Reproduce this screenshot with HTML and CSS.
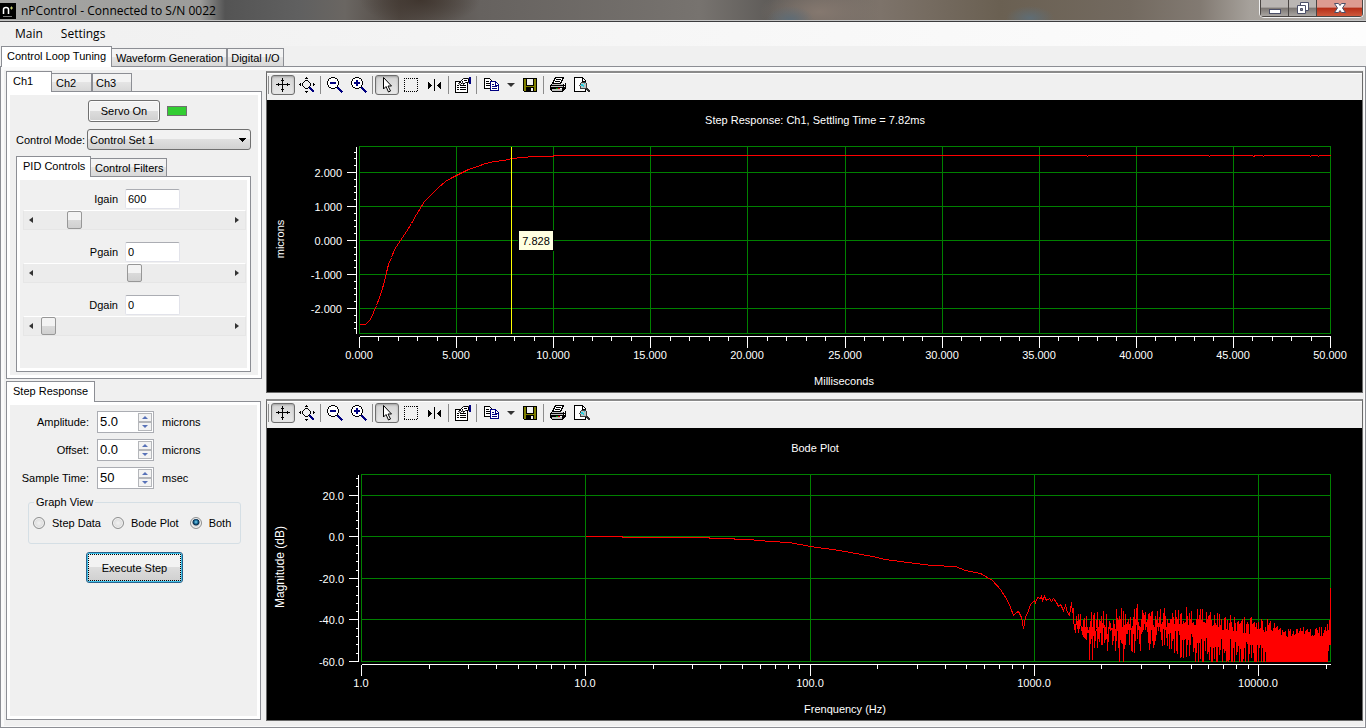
FILE: index.html
```html
<!DOCTYPE html>
<html lang="en">
<head>
<meta charset="utf-8">
<title>nPControl - Connected to S/N 0022</title>
<link rel="stylesheet" href="styles.css">
</head>
<body>
<svg class="defs" aria-hidden="true">
  <symbol id="i-pan" viewBox="0 0 16 16"><path d="M7 2h1v12h-1zM2 7h12v1h-12z M6 3h3v1h-3zM6 12h3v1h-3zM3 6h1v3h-1zM12 6h1v3h-1z M7 1h1v1h-1zM1 7h1v1h-1zM14 7h1v1h-1zM7 14h1v1h-1z"/></symbol>
  <symbol id="i-fit" viewBox="0 0 16 16"><path d="M7 0h1v1h-1zM6 1h3v1h-3zM7 15h1v1h-1zM6 14h3v1h-3zM0 7h1v1h-1zM1 6h1v3h-1zM15 7h1v1h-1zM14 6h1v3h-1z"/><path d="M6 3h3v1h-3zM6 11h3v1h-3zM3 6h1v3h-1zM11 6h1v3h-1zM4 5h1v1h-1zM5 4h1v1h-1zM9 4h1v1h-1zM10 5h1v1h-1zM4 9h1v1h-1zM5 10h1v1h-1zM9 10h1v1h-1zM10 9h1v1h-1z"/><path fill="#000080" d="M10 10h2v1h-2zM10 11h3v1h-3zM11 12h3v1h-3zM12 13h3v1h-3zM13 14h2v1h-2z"/></symbol>
  <symbol id="i-lens" viewBox="0 0 16 16"><path d="M4 0h4v1h-4zM2 1h2v1h-2zM8 1h2v1h-2zM1 2h1v2h-1zM10 2h1v2h-1zM0 4h1v4h-1zM11 4h1v4h-1zM1 8h1v2h-1zM10 8h1v2h-1zM2 10h2v1h-2zM8 10h2v1h-2zM4 11h4v1h-4z"/><path fill="#fff" d="M4 1h4v10h-4zM2 2h8v8h-8zM1 4h10v4h-10z"/><path fill="#000080" d="M3 5h6v2h-6zM10 10h2v1h-2zM10 11h3v1h-3zM11 12h3v1h-3zM12 13h3v1h-3zM13 14h3v1h-3zM14 15h1v1h-1z"/></symbol>
  <symbol id="i-plus" viewBox="0 0 16 16"><path fill="#000080" d="M5 3h2v6h-2z"/></symbol>
  <symbol id="i-arrow" viewBox="0 0 16 16"><path fill="#fff" stroke="#000" shape-rendering="auto" d="M4.500.500v11.500l2.500-2.500 2.500 5.500 2-1-2.500-5h3.500z"/></symbol>
  <symbol id="i-box" viewBox="0 0 16 16"><path fill="none" stroke="#000" stroke-dasharray="1 1" d="M1 1.500h14M1 14.500h14M1.500 1v14M14.500 1v14"/></symbol>
  <symbol id="i-cursor" viewBox="0 0 16 16"><path d="M7 2h1v12h-1zM1 5h1v7h-1zM2 6h1v5h-1zM3 7h1v3h-1zM4 8h1v1h-1zM13 5h1v7h-1zM12 6h1v5h-1zM11 7h1v3h-1zM10 8h1v1h-1z"/></symbol>
  <symbol id="i-props" viewBox="0 0 16 16"><path fill="#fff" stroke="#000" d="M.500 4.500h12v10.500h-12z"/><path d="M2 8h2v1h-2zM5 8h6v1h-6zM2 10h2v1h-2zM5 10h6v1h-6zM2 12h2v1h-2zM5 12h6v1h-6z"/><path fill="#fff" stroke="#000" shape-rendering="auto" d="M3.500 6.500l5-5h5v4h-3l-2 2-1-2-2 2z"/><path d="M5 5h1v1h-1zM7 4h1v1h-1zM8 6h1v1h-1zM9 3h3v1h-3z"/><path fill="#000080" d="M14 0h2v7h-2z"/></symbol>
  <symbol id="i-copy" viewBox="0 0 16 16"><path fill="#fff" stroke="#000" d="M1.500 1.500h5l3 3v7h-8z"/><path d="M3 4h3v1h-3zM3 6h5v1h-5zM3 8h4v1h-4z"/><path fill="#fff" stroke="#000080" d="M7.500 4.500h5l3 3v6h-8z"/><path fill="#000080" d="M12 5h1v3h3v1h-4zM9 7h2v1h-2zM9 9h5v1h-5zM9 11h5v1h-5z"/></symbol>
  <symbol id="i-save" viewBox="0 0 16 16"><path d="M1 1h14v14h-13l-1-1z"/><path fill="#808000" d="M2 2h2v7h8v-7h2v12h-2v-4h-8v4h-2z"/><path fill="#f0f0f0" d="M5 2h6v6h-6zM9 11h2v3h-2z"/></symbol>
  <symbol id="i-print" viewBox="0 0 16 16"><path fill="#fff" stroke="#000" d="M5.500.500h8l-3 6h-8z"/><path d="M6 2h5v1h-5zM5 4h5v1h-5zM1 7h13l2-2v6l-3 4h-10l-3-2v-4z"/><path fill="#c0c0c0" d="M2 7h11v1h-11zM1 9h12v1h-12zM2 12h10v2h-10z"/><path fill="#00a000" d="M6 11h2v1h-2z"/><path fill="#e00000" d="M8 11h2v1h-2z"/><path fill="#fff" d="M10 11h2v1h-2zM14 7h1v1h-1zM14 9h1v1h-1z"/></symbol>
  <symbol id="i-preview" viewBox="0 0 16 16"><path fill="#fff" stroke="#000" d="M.500.500h8l3 3v11h-11z"/><path d="M8 1h1v3h3v1h-4z"/><circle cx="9.500" cy="8.500" r="3.500" fill="#b8c4c4" stroke="#404040"/><path fill="#20d0e0" d="M7 7h2v1h1v2h-1v-1h-2zM10 6h1v1h-1z"/><path fill="#303030" d="M12 11h2v1h1v1h1v2h-2v-1h-1v-1h-1z"/></symbol>
</svg>

<div class="window">
  <header class="titlebar">
    <svg class="app-icon" viewBox="0 0 16 16" aria-hidden="true"><rect width="16" height="16" fill="#000"/><path d="M3.500 11V6.500q0-2 2.500-2t2.500 2V11" fill="none" stroke="#fff" stroke-width="1.500"/><path d="M10 5h3M11.500 3.500v3" stroke="#c8d070"/><path d="M3 13.500h9" stroke="#777"/></svg>
    <h1 class="title">nPControl - Connected to S/N 0022</h1>
    <div class="win-buttons">
      <button class="win-btn" aria-label="Minimize"><svg viewBox="0 0 14 14"><rect x="1.500" y="8.500" width="11" height="4" fill="#fff" stroke="#4c5068"/></svg></button>
      <button class="win-btn" aria-label="Restore"><svg viewBox="0 0 14 14"><path fill="#fff" stroke="#4c5068" d="M4.500 1.500h8v8h-8z"/><path fill="#fff" stroke="#4c5068" d="M1.500 4.500h8v8h-8z"/><path fill="#8a8a90" stroke="#4c5068" d="M4.500 7.500h2v2h-2z"/></svg></button>
      <button class="win-btn close" aria-label="Close"><svg viewBox="0 0 14 14"><path fill="#fff" stroke="#4c5068" d="M1.500 2.500h4l1.500 2 1.500-2h4l-3 4.500 3 4.500h-4l-1.500-2-1.500 2h-4l3-4.500z"/></svg></button>
    </div>
  </header>
  <nav class="menubar"><button>Main</button><button>Settings</button></nav>

  <div class="tabs main-tabs" role="tablist">
    <button class="tab active" role="tab" aria-selected="true">Control Loop Tuning</button>
    <button class="tab" role="tab">Waveform Generation</button>
    <button class="tab" role="tab">Digital I/O</button>
  </div>

  <main class="page">
    <aside class="side">
      <div class="tabs channel-tabs" role="tablist">
        <button class="tab active" role="tab" aria-selected="true">Ch1</button>
        <button class="tab" role="tab">Ch2</button>
        <button class="tab" role="tab">Ch3</button>
      </div>
      <section class="panel channel">
        <div class="servo"><button class="btn">Servo On</button><span class="led"></span></div>
        <div class="mode"><label for="mode">Control Mode:</label>
          <select id="mode"><option>Control Set 1</option></select></div>
        <div class="tabs pid-tabs" role="tablist">
          <button class="tab active" role="tab" aria-selected="true">PID Controls</button>
          <button class="tab" role="tab">Control Filters</button>
        </div>
        <section class="panel pid">
          <div class="gain">
            <label for="igain">Igain</label><input id="igain" type="text" value="600">
            <div class="scroll"><button class="prev" aria-label="Decrease Igain"></button><input type="range" aria-label="Igain slider" min="0" max="3900" value="600"><button class="next" aria-label="Increase Igain"></button></div>
          </div>
          <div class="gain">
            <label for="pgain">Pgain</label><input id="pgain" type="text" value="0">
            <div class="scroll"><button class="prev" aria-label="Decrease Pgain"></button><input type="range" aria-label="Pgain slider" min="-100" max="100" value="0"><button class="next" aria-label="Increase Pgain"></button></div>
          </div>
          <div class="gain">
            <label for="dgain">Dgain</label><input id="dgain" type="text" value="0">
            <div class="scroll"><button class="prev" aria-label="Decrease Dgain"></button><input type="range" aria-label="Dgain slider" min="0" max="100" value="0"><button class="next" aria-label="Increase Dgain"></button></div>
          </div>
        </section>
      </section>

      <div class="tabs step-tabs" role="tablist"><button class="tab active" role="tab" aria-selected="true">Step Response</button></div>
      <section class="panel step">
        <div class="fields">
          <label for="amp">Amplitude:</label>
          <div class="spin"><input id="amp" type="text" value="5.0"><span class="arrows"><button aria-label="Up"></button><button aria-label="Down"></button></span></div><span>microns</span>
          <label for="off">Offset:</label>
          <div class="spin"><input id="off" type="text" value="0.0"><span class="arrows"><button aria-label="Up"></button><button aria-label="Down"></button></span></div><span>microns</span>
          <label for="time">Sample Time:</label>
          <div class="spin"><input id="time" type="text" value="50"><span class="arrows"><button aria-label="Up"></button><button aria-label="Down"></button></span></div><span>msec</span>
        </div>
        <fieldset class="view">
          <legend>Graph View</legend>
          <label><input type="radio" name="view">Step Data</label>
          <label><input type="radio" name="view">Bode Plot</label>
          <label><input type="radio" name="view" checked>Both</label>
        </fieldset>
        <button class="btn execute">Execute Step</button>
      </section>
    </aside>

    <div class="graphs">
      <section class="graph">
        <div class="toolbar" role="toolbar" aria-label="Step response tools"></div>
        <div class="plot" id="step-plot"></div>
      </section>
      <section class="graph">
        <div class="toolbar" role="toolbar" aria-label="Bode plot tools"></div>
        <div class="plot" id="bode-plot"></div>
      </section>
    </div>
  </main>
</div>
<script src="app.js"></script>
</body>
</html>
```
FILE: styles.css
```css
* { box-sizing: border-box; }
body { margin: 0; font: 11px/14px "Liberation Sans", Arial, sans-serif; color: #000; background: #f0f0f0; }
button, input, select { font: inherit; color: inherit; margin: 0; }
.defs { display: none; }
.window { min-height: 100vh; display: flex; flex-direction: column; }

.titlebar {
  display: flex; align-items: center; height: 22px; padding: 0 2px 0 0;
  border-bottom: 1px solid #3c3c3e; box-shadow: inset 0 -1px #c4c4c4;
  background:
    radial-gradient(ellipse 24px 14px at 790px 20px, #5e6c76, transparent),
    radial-gradient(ellipse 24px 12px at 1030px 18px, #5f6d75, transparent),
    radial-gradient(ellipse 60px 26px at 420px 0, #40362f, transparent),
    radial-gradient(ellipse 60px 26px at 820px 12px, #85786f, transparent),
    linear-gradient(90deg, #a6a6a4 0, #9c9c9a 200px, #545454 225px, #606060 300px, #6a6662 345px, #504842 400px, #66625f 480px, #77736f 700px, #5f5c59 770px, #7d736a 880px, #6a6052 1000px, #736a60 1130px, #827a72 1200px, #a6a19b 1250px, #b4b0ac);
}
.app-icon { width: 16px; height: 16px; }
.title { flex: 1; margin: 0 0 0 5px; font: 12px/20px "Open Sans", "Noto Sans", sans-serif; }
.win-buttons { display: flex; align-self: flex-start; height: 18px; border: 1px solid #f0f0f0; border-top: 0; border-radius: 0 0 5px 5px; overflow: hidden; }
.win-btn { width: 28px; height: 17px; padding: 0; border: 1px solid #4a4644; border-width: 0 0 1px 1px; background: linear-gradient(#bab6b3 0 45%, #7b7672 50%, #a9a5a1); display: flex; justify-content: center; align-items: center; }
.win-btn svg { width: 14px; height: 14px; }
.win-btn.close { width: 47px; border-right-width: 1px; background: linear-gradient(#dd9b90 0 45%, #b52d16 50%, #cf5a3c); }

.menubar { display: flex; height: 24px; padding-left: 7px; background: linear-gradient(90deg, #f0f0f0, #fdfdfd); }
.menubar button { border: 0; background: none; padding: 0 8px; margin-right: 2px; font: 12px/22px "Open Sans", "Noto Sans", sans-serif; }

.tabs { display: flex; align-items: flex-end; height: 20px; }
.tab { height: 18px; padding: 1px 3px 0; border: 1px solid #8c8e94; border-bottom: 0; background: linear-gradient(#f3f3f3 0 45%, #e4e4e4 50%, #d8d8d8); white-space: nowrap; }
.tab.active { height: 21px; margin-bottom: -1px; padding: 0 6px 2px; position: relative; z-index: 1; background: #fff; }
.active + .tab { border-left: 0; padding-left: 4px; }
.main-tabs .active { width: 111px; padding-left: 5px; margin-left: 1px; }
.panel { border: 1px solid #8c8e94; box-shadow: inset 0 0 0 3px #fff; }

.page { flex: 1; display: flex; gap: 4px; padding: 4px 2px 6px 5px; border: 1px solid #8c8e94; box-shadow: inset 1px 1px 0 2px #fafafa; }
.side { width: 256px; flex: none; display: flex; flex-direction: column; }
.channel-tabs .tab { width: 40px; text-align: left; }
.channel-tabs .active { width: 46px; }
.channel { height: 288px; padding: 8px 10px 6px 9px; display: flex; flex-direction: column; }
.servo { display: flex; align-items: center; gap: 7px; padding-left: 72px; }
.btn { border: 1px solid #707070; border-radius: 3px; box-shadow: inset 0 0 0 1px #fcfcfc; background: linear-gradient(#f2f2f2 0 48%, #dddddd 50%, #cfcfcf); }
.servo .btn { width: 72px; height: 22px; padding: 0; }
.led { width: 20px; height: 10px; border: 1px solid #707070; background: #32cd32; }
.mode { display: flex; align-items: center; justify-content: space-between; margin: 7px 0 6px; }
.mode label { white-space: nowrap; }
select { appearance: none; width: 164px; height: 21px; padding: 0 2px; border: 1px solid #707070; border-radius: 3px;
  background: linear-gradient(#000, #000) 151px 8px / 7px 1px no-repeat, linear-gradient(#000, #000) 152px 9px / 5px 1px no-repeat, linear-gradient(#000, #000) 153px 10px / 3px 1px no-repeat, linear-gradient(#000, #000) 154px 11px / 1px 1px no-repeat, linear-gradient(#f2f2f2 0 48%, #e0e0e0 50%, #d2d2d2); }
.pid-tabs .active { width: 75px; }
.pid { flex: 1; padding: 12px 5px 0 6px; }
.gain { display: grid; grid-template-columns: 95px 55px; column-gap: 7px; row-gap: 1px; align-items: center; margin-bottom: 12px; }
.gain label { text-align: right; }
.gain input[type=text] { width: 55px; height: 20px; padding: 0 2px; border: 1px solid #e2e3ea; border-top-color: #abadb3; border-radius: 2px; background: #fff; }
.scroll { grid-column: 1 / -1; width: 223px; height: 20px; display: flex; align-items: center; border: 1px solid #e6e6e6; border-top-color: #fff; background: #ececec; }
.scroll button { width: 17px; height: 17px; border: 0; padding: 0; background: none; display: flex; align-items: center; justify-content: center; }
.scroll button::before { content: ""; border: 3px solid transparent; }
.scroll .prev { justify-content: flex-start; padding-left: 5px; }
.scroll .prev::before { border-right: 4px solid #333; border-left: 0; }
.scroll .next::before { border-left: 4px solid #333; border-right: 0; }
.scroll input { appearance: none; flex: 1; min-width: 0; height: 18px; background: none; }
.scroll input::-webkit-slider-thumb { appearance: none; width: 15px; height: 18px; border: 1px solid #979797; border-radius: 2px; background: linear-gradient(#f3f3f3 0 48%, #dadada 50%, #d0d0d0); }

.step-tabs { margin-top: 2px; }
.step-tabs .active { width: 89px; }
.step { flex: 1; width: 255px; padding: 9px 12px 8px; margin-bottom: 1px; }
.fields { display: grid; grid-template-columns: 69px 57px 1fr; gap: 6px 8px; padding-left: 1px; align-items: center; }
.fields label { text-align: right; white-space: nowrap; }
.spin { display: flex; height: 22px; border: 1px solid #abadb3; background: #fff; padding: 1px; }
.spin input { width: 39px; border: 0; padding: 0 1px; font-size: 13px; background: none; }
.arrows { display: flex; flex-direction: column; flex: 1; }
.arrows button { flex: 1; min-height: 0; padding: 0; border: 1px solid #b4b6ba; background: #f3f3f3; display: flex; justify-content: center; align-items: center; }
.arrows button::before { content: ""; border: 3px solid transparent; border-top: 0; border-bottom-color: #5872b8; }
.arrows button:last-child::before { border: 3px solid transparent; border-bottom: 0; border-top-color: #5872b8; }
.view { display: flex; align-items: center; width: 213px; height: 49px; margin: 6px 0 0 9px; padding: 0 4px 6px; gap: 11px; border: 1px solid #d5dfe5; border-radius: 3px; min-width: 0; }
.view legend { padding: 0 2px; margin-left: 1px; }
.view label { display: flex; align-items: center; gap: 7px; white-space: nowrap; }
.view input { appearance: none; width: 12px; height: 12px; border: 1px solid #8e8f8f; border-radius: 50%; box-shadow: inset 0 0 0 1px #f4f4f4; background: radial-gradient(#f2f2f2, #cfcfcf); }
.view input:checked { background: radial-gradient(circle at 5px 4px, #7fd8f4 0, #12608e 2px, #0c2c48 3px, #dcdcdc 4px); }
.execute { display: block; width: 97px; height: 31px; margin: 8px 0 0 67px; padding: 0; border-color: #2c628b; box-shadow: inset 0 0 0 1px #3fc3ea; outline: 1px dotted #000; outline-offset: -3px; }

.graphs { flex: 1; min-width: 0; display: flex; flex-direction: column; gap: 6px; }
.graph { flex: 1; min-height: 300px; display: flex; flex-direction: column; border: 1px solid #696969; border-top: 2px solid #8a8a8a; }
.toolbar { display: flex; align-items: center; height: 27px; padding: 0 0 3px 4px; background: #f0f0f0; flex: none; box-shadow: inset 0 1px #fff; }
.toolbar button { width: 24px; height: 20px; padding: 0; border: 0; background: none; display: flex; align-items: center; justify-content: center; }
.toolbar button.on { border: 1px solid #6e6e6e; border-radius: 3px; background: linear-gradient(#d4d4d4, #e8e8e8); box-shadow: inset 0 1px 2px #a0a0a0; }
.toolbar svg { width: 16px; height: 16px; flex: none; shape-rendering: crispEdges; }
.toolbar .sep { width: 4px; height: 18px; background: linear-gradient(#8c8c8c, #8c8c8c) 1px 0 / 1px 100% no-repeat; }
.toolbar .grip { width: 1px; height: 18px; margin-left: -3px; margin-right: 2px; background: #8c8c8c; }
.toolbar button.drop { width: 15px; }
.drop::before { content: ""; border: 4px solid transparent; border-top-color: #333; border-bottom: 0; }
.plot { flex: 1; min-height: 0; background: #000; overflow: hidden; }
.plot svg { display: block; shape-rendering: crispEdges; }
.plot text { fill: #fff; font: 11px "Liberation Sans", Arial, sans-serif; }
.plot .wide { font-size: 12px; }
.plot .tip { fill: #000; }
.grid { stroke: #008000; fill: none; }
.axis { stroke: #fff; fill: none; }
.trace { stroke: #f00; fill: none; }
.cursor { stroke: #ff0; }
.tip-box { fill: #ffffe1; stroke: #000; }
```
FILE: app.js
```js
const icon = (...ids) => `<svg viewBox="0 0 16 16" aria-hidden="true">${ids.map(i => `<use href="#i-${i}"/>`).join('')}</svg>`;
const tool = (label, ids, cls = '') => `<button class="${cls}" aria-label="${label}" title="${label}">${ids ? icon(...ids) : ''}</button>`;
const sep = '<span class="sep"></span>';
document.querySelectorAll('.toolbar').forEach(bar => {
  bar.innerHTML = '<span class="grip"></span>' +
    tool('Pan', ['pan'], 'on') + tool('Zoom to fit', ['fit']) + sep +
    tool('Zoom out', ['lens']) + tool('Zoom in', ['lens', 'plus']) + sep +
    tool('Select', ['arrow'], 'on') + tool('Zoom box', ['box']) + tool('Data cursor', ['cursor']) + sep +
    tool('Properties', ['props']) + sep + tool('Copy', ['copy']) + tool('Copy options', null, 'drop') +
    tool('Save', ['save']) + sep + tool('Print', ['print']) + tool('Preview', ['preview']);
});

const px = v => Math.floor(v) + 0.5;
const text = (x, y, s, anchor = 'middle', cls = '') => `<text class="${cls}" x="${Math.round(x)}" y="${Math.round(y)}" text-anchor="${anchor}">${s}</text>`;
const line = pts => 'M' + pts.map(([x, y]) => `${px(x)} ${px(y)}`).join('L');

function frame(box, o) {
  const W = box.clientWidth, H = box.clientHeight;
  const a = { W, H, l: o.left + 0.5, r: W - 31.5, t: 46.5, b: H - 58.5 };
  a.x = v => a.l + (a.r - a.l) * o.fx(v);
  a.y = v => a.t + (a.b - a.t) * (o.ymax - v) / (o.ymax - o.ymin);
  let grid = `M${a.l} ${a.t}H${a.r}V${a.b}H${a.l}Z`;
  let axis = `M${a.l - 3} ${a.t}V${a.b}M${a.l} ${a.b + 3}H${a.r}`;
  let labels = '';
  o.ymajor.forEach(v => {
    const y = px(a.y(v));
    grid += `M${a.l} ${y}H${a.r}`; axis += `M${a.l - 13} ${y}H${a.l - 3}`;
    labels += text(a.l - 18, y + 4, v.toFixed(o.dec), 'end');
  });
  o.yminor.forEach(v => axis += `M${a.l - 6} ${px(a.y(v))}h3`);
  o.xmajor.forEach(v => {
    const x = px(a.x(v));
    grid += `M${x} ${a.t}V${a.b}`; axis += `M${x} ${a.b + 3}v11`;
    labels += text(x - 1, a.b + 25, v.toFixed(o.dec));
  });
  o.xminor.forEach(v => axis += `M${px(a.x(v))} ${a.b + 3}v4`);
  a.base = `<path class="grid" d="${grid}"/><path class="axis" d="${axis}"/>${labels}` +
    text(W / 2, 24, o.title) + text((a.l + a.r) / 2 - 1, a.b + 51, o.xlabel) +
    `<text class="${o.cls}" transform="translate(17 ${Math.round((a.t + a.b) / 2) - 1}) rotate(-90)" text-anchor="middle">${o.ylabel}</text>`;
  return a;
}
const range = (from, to, step) => Array.from({ length: Math.floor((to - from) / step + 1.001) }, (_, i) => from + i * step);
const put = (box, a, body) => box.innerHTML = `<svg width="${a.W}" height="${a.H}" role="img">${a.base}${body}</svg>`;

// [pixels right of origin, pixels below plot top] on a 971 x 187 plot area
const stepData = [[0,178],[6,178],[8,176],[11,173],[14,166],[17,159],[20,151],[22,145],[25,135],[27,126],[29,118],[32,111],[35,103],[39,97],[43,91],[47,85],[52,77],[57,68],[62,60],[65,55],[72,48],[79,41],[86,35],[93,31],[101,27],[109,23],[118,20],[126,17],[135,15],[144,14],[153,12],[163,11],[175,10],[194,10],[194,9],[727,9],[728,10],[729,9],[849,9],[850,10],[851,9],[893,9],[894,10],[896,9],[903,9],[904,10],[905,9],[950,9],[951,10],[952,9],[958,9],[959,10],[960,9],[971,9]];
const bodeData = [[224,62],[261,62],[261,63],[348,63],[348,64],[373,64],[373,65],[388,65],[397,66],[409,67],[428,68],[449,72],[478,76],[511,82],[524,85],[539,87],[554,89],[570,91],[594,92],[604,96],[619,99],[631,106],[639,115],[646,126],[649,133],[652,141],[655,138],[657,137],[660,143],[662,154],[664,143],[667,136],[669,130],[673,126],[674,128],[676,123],[679,124],[680,122],[681,126],[683,122],[685,126],[688,124],[690,127],[692,124],[695,128],[697,132],[699,130],[702,136],[704,131],[706,138],[708,141],[710,128],[711,138]];
// Noise band: [offset, shallowest, deepest]
const band = [[711,134,148],[718,136,160],[730,136,172],[742,137,178],[760,133,180],[775,134,178],[800,134,172],[820,134,184],[845,134,198],[870,139,206],[890,142,214],[907,145,218],[925,152,230],[950,153,240],[968,150,250]];

function drawStep() {
  const box = document.getElementById('step-plot');
  const a = frame(box, { left: 92, fx: v => v / 50, ymax: 2.765, ymin: -2.735, dec: 3,
    ymajor: range(-2, 2, 1), yminor: range(-2.6, 2.6, 0.2), xmajor: range(0, 50, 5), xminor: range(0, 50, 1),
    title: 'Step Response: Ch1, Settling Time = 7.82ms', xlabel: 'Milliseconds', ylabel: 'microns', cls: '' });
  const sx = (a.r - a.l) / 971, sy = (a.b - a.t) / 187;
  const cx = px(a.x(7.84)), cy = px(a.y(0));
  put(box, a, `<path class="trace" d="${line(stepData.map(([x, y]) => [a.l + x * sx, a.t + y * sy]))}"/>
    <path class="cursor" d="M${cx} ${a.t}V${a.b}"/>
    <rect class="tip-box" x="${cx + 7}" y="${cy - 10}" width="35" height="20"/>` + text(cx + 24, cy + 4, '7.828', 'middle', 'tip'));
}

function drawBode() {
  const box = document.getElementById('bode-plot');
  const minor = [];
  for (let d = 1; d <= 10000; d *= 10) for (let k = 2; k < 10; k++) if (d * k < 20900) minor.push(d * k);
  const a = frame(box, { left: 94, fx: v => Math.log10(v) / 4.321, ymax: 30, ymin: -60, dec: 1,
    ymajor: range(-60, 20, 20), yminor: range(-56, 28, 4), xmajor: [1, 10, 100, 1000, 10000], xminor: minor,
    title: 'Bode Plot', xlabel: 'Frenquency (Hz)', ylabel: 'Magnitude (dB)', cls: 'wide' });
  const sx = (a.r - a.l) / 969, sy = (a.b - a.t) / 187;
  let seed = 22;
  const rnd = () => (seed = (seed * 16807) % 2147483647) / 2147483647;
  const pts = bodeData.slice();
  for (let x = 712; x < 967; x++) {
    const i = band.findIndex(b => b[0] > x), p = band[i - 1], q = band[i], t = (x - p[0]) / (q[0] - p[0]);
    const top = p[1] + (q[1] - p[1]) * t, low = p[2] + (q[2] - p[2]) * t;
    const dense = x > 905;
    const hi = top + (dense ? 11 : x < 780 ? 24 : 19) * rnd() - (rnd() > 0.95 ? 4 : 0);
    const lo = top + 8 + (low - top - 8) * (dense ? 0.6 + 0.6 * rnd() : 0.2 + 0.8 * rnd()) + (rnd() > 0.94 ? 18 : 0);
    pts.push([x, hi], [x, Math.min(187, Math.max(hi, lo))]);
  }
  pts.push([968, 146], [968, 170], [969, 170], [969, 113]);
  put(box, a, `<path class="trace" d="${line(pts.map(([x, y]) => [a.l + x * sx, a.t + y * sy]))}"/>`);
}
function draw() { drawStep(); drawBode(); }
draw();
addEventListener('resize', draw);
```
